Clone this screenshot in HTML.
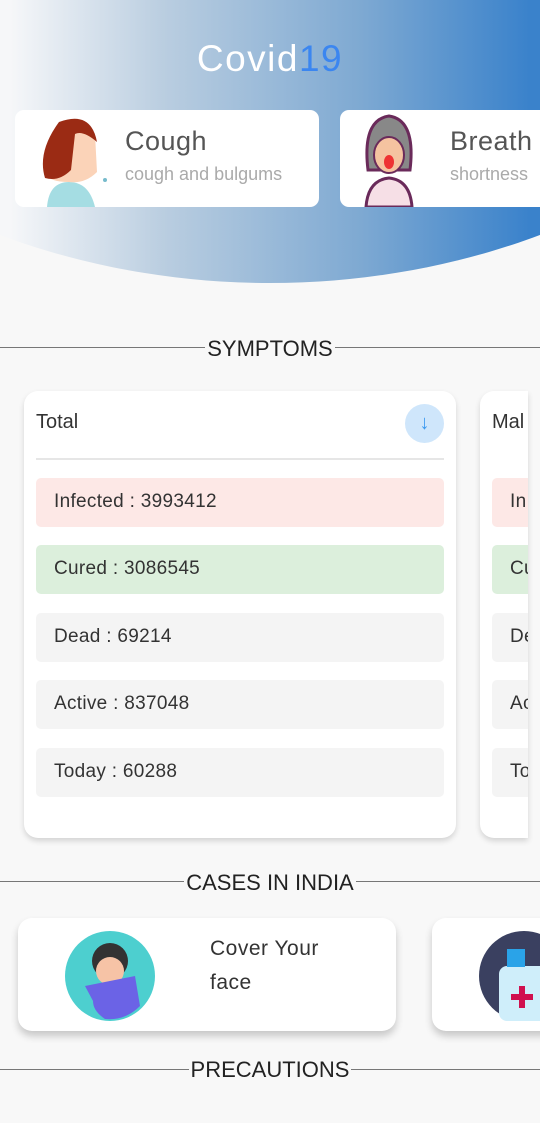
<!DOCTYPE html>
<html><head><meta charset="utf-8"><style>
*{margin:0;padding:0;box-sizing:border-box}
body{width:540px;height:1123px;background:#f8f8f8;font-family:"Liberation Sans",sans-serif;position:relative;overflow:hidden;color:#333}
.hdr{position:absolute;left:-380px;top:-779px;width:1300px;height:1062px;border-radius:50%;overflow:hidden;background:linear-gradient(90deg,#f6f7f9 30%,#b9cde0 42%,#7ea9d2 57%,#3a82cb 70%)}
.title{position:absolute;top:38px;width:540px;text-align:center;font-size:37px;color:#fff;letter-spacing:1.5px}
.title span{color:#3b86f0}
.sc{position:absolute;top:110px;height:97px;background:#fff;border-radius:9px}
.sc .t{position:absolute;left:110px;top:16px;font-size:27px;color:#555;letter-spacing:.5px}
.sc .s{position:absolute;left:110px;top:54px;font-size:18px;color:#aaa}
.div{position:absolute;left:0;width:540px;height:1px;background:#777}
.lab{position:absolute;width:540px;text-align:center;font-size:22px;color:#222}
.lab span{background:#f8f8f8;padding:0 2px}
.card{position:absolute;top:391px;background:#fff;border-radius:14px;box-shadow:0 3px 6px rgba(0,0,0,.15)}
.row{position:absolute;left:12px;width:408px;height:49px;border-radius:5px;background:#f4f4f4;font-size:19px;padding:13px 18px;color:#333;letter-spacing:.3px}
.pc{position:absolute;top:918px;height:113px;background:#fff;border-radius:14px;box-shadow:0 5px 8px rgba(0,0,0,.2)}
</style></head><body>
<div class="hdr"></div>
<div class="title">Covid<span>19</span></div>
<div class="sc" style="left:15px;width:304px">
<svg style="position:absolute;left:14px;top:2px" width="80" height="95" viewBox="0 0 80 95"><path d="M18 95 Q20 70 40 70 Q60 70 66 95Z" fill="#a5dde3"/><path d="M30 18 Q52 2 66 22 L68 60 Q56 72 40 70 Q20 70 18 62 Q10 40 30 18Z" fill="#fbd3b8"/><path d="M30 10 Q62 -2 68 30 Q54 18 46 22 L42 58 Q30 70 16 66 Q8 40 30 10Z" fill="#9b2b14"/><circle cx="76" cy="68" r="2" fill="#7bc"/></svg>
<div class="t">Cough</div><div class="s">cough and bulgums</div></div>
<div class="sc" style="left:340px;width:230px">
<svg style="position:absolute;left:4px;top:0" width="90" height="97" viewBox="0 0 90 97"><path d="M22 97 Q24 70 45 68 Q66 70 68 97Z" fill="#f6dfe6" stroke="#6a2a5a" stroke-width="3"/><path d="M24 60 Q18 10 45 6 Q72 10 66 60Z" fill="#888" stroke="#6a2a5a" stroke-width="3"/><ellipse cx="45" cy="45" rx="15" ry="18" fill="#f5c3a0" stroke="#6a2a5a" stroke-width="2"/><ellipse cx="45" cy="52" rx="5" ry="7" fill="#e33"/></svg>
<div class="t">Breath</div><div class="s">shortness</div></div>
<div class="div" style="top:347px"></div><div class="lab" style="top:336px"><span>SYMPTOMS</span></div>
<div class="card" style="left:24px;width:432px;height:447px">
<div style="position:absolute;left:12px;top:20px;font-size:20px">Total</div>
<div style="position:absolute;left:381px;top:13px;width:39px;height:39px;border-radius:50%;background:#cfe6fb;color:#3c9af0;text-align:center;line-height:38px;font-size:20px">↓</div>
<div style="position:absolute;left:12px;top:67px;width:408px;height:2px;background:#e6e6e6"></div>
<div class="row" style="top:87px;background:#fde8e6">Infected : 3993412</div>
<div class="row" style="top:154px;background:#dcefdc">Cured : 3086545</div>
<div class="row" style="top:222px">Dead : 69214</div>
<div class="row" style="top:289px">Active : 837048</div>
<div class="row" style="top:357px">Today : 60288</div>
</div>
<div class="card" style="left:480px;width:48px;height:447px;border-radius:14px 0 0 14px;overflow:hidden">
<div style="position:absolute;left:12px;top:20px;font-size:20px">Mal</div>
<div class="row" style="top:87px;background:#fde8e6;width:60px">In</div>
<div class="row" style="top:154px;background:#dcefdc;width:60px">Cu</div>
<div class="row" style="top:222px;width:60px">De</div>
<div class="row" style="top:289px;width:60px">Ac</div>
<div class="row" style="top:357px;width:60px">To</div>
</div>
<div class="div" style="top:881px"></div><div class="lab" style="top:870px"><span>CASES IN INDIA</span></div>
<div class="pc" style="left:18px;width:378px">
<svg style="position:absolute;left:47px;top:13px" width="90" height="90" viewBox="0 0 90 90"><circle cx="45" cy="45" r="45" fill="#4dcfcf"/><circle cx="45" cy="30" r="18" fill="#333"/><circle cx="45" cy="40" r="14" fill="#f6c3a6"/><path d="M20 55 L70 45 L75 75 Q60 90 40 88 Q28 80 28 70Z" fill="#6b63e6"/></svg>
<div style="position:absolute;left:192px;top:14px;font-size:21px;line-height:34px;color:#333;letter-spacing:.5px">Cover Your<br>face</div></div>
<div class="pc" style="left:432px;width:140px">
<svg style="position:absolute;left:47px;top:13px" width="70" height="90" viewBox="0 0 70 90"><circle cx="45" cy="45" r="45" fill="#3a4060"/><rect x="20" y="35" width="50" height="55" rx="8" fill="#cfeefa"/><rect x="28" y="18" width="18" height="18" fill="#2aa3e8"/><path d="M40 55h6v8h8v6h-8v8h-6v-8h-8v-6h8z" fill="#d0104e"/></svg></div>
<div class="div" style="top:1069px"></div><div class="lab" style="top:1057px"><span>PRECAUTIONS</span></div>
</body></html>
